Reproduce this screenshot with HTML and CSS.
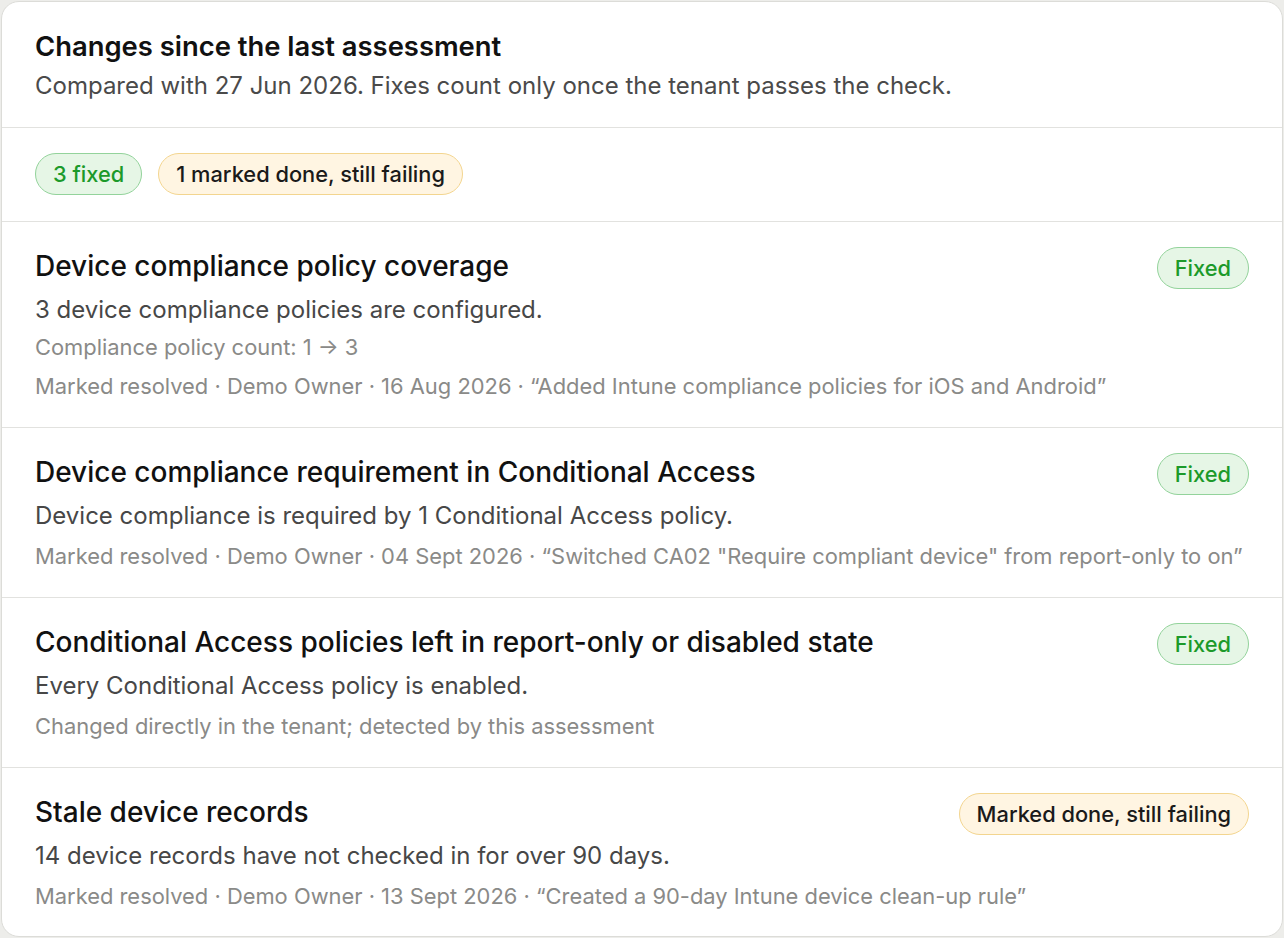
FILE: index.html
```html
<!DOCTYPE html>
<html lang="en">
<head>
    <meta charset="UTF-8">
    <meta name="viewport" content="width=device-width, initial-scale=1.0">
    <title>Changes since the last assessment</title>
    <link rel="stylesheet" href="styles.css">
</head>
<body>
    <div class="card">
        <div class="card-header">
            <h2>Changes since the last assessment</h2>
            <p>Compared with 27 Jun 2026. Fixes count only once the tenant passes the check.</p>
        </div>

        <div class="summary">
            <span class="pill pill-fixed">3 fixed</span>
            <span class="pill pill-failing">1 marked done, still failing</span>
        </div>

        <div class="change">
            <h3>Device compliance policy coverage</h3>
            <span class="pill pill-fixed">Fixed</span>
            <p class="desc">3 device compliance policies are configured.</p>
            <p class="detail">Compliance policy count: 1 → 3</p>
            <p class="note">Marked resolved · Demo Owner · 16 Aug 2026 · “Added Intune compliance policies for iOS and Android”</p>
        </div>

        <div class="change">
            <h3>Device compliance requirement in Conditional Access</h3>
            <span class="pill pill-fixed">Fixed</span>
            <p class="desc">Device compliance is required by 1 Conditional Access policy.</p>
            <p class="note">Marked resolved · Demo Owner · 04 Sept 2026 · “Switched CA02 "Require compliant device" from report-only to on”</p>
        </div>

        <div class="change">
            <h3>Conditional Access policies left in report-only or disabled state</h3>
            <span class="pill pill-fixed">Fixed</span>
            <p class="desc">Every Conditional Access policy is enabled.</p>
            <p class="note">Changed directly in the tenant; detected by this assessment</p>
        </div>

        <div class="change">
            <h3>Stale device records</h3>
            <span class="pill pill-failing">Marked done, still failing</span>
            <p class="desc">14 device records have not checked in for over 90 days.</p>
            <p class="note">Marked resolved · Demo Owner · 13 Sept 2026 · “Created a 90-day Intune device clean-up rule”</p>
        </div>
    </div>
</body>
</html>
```

FILE: styles.css
```css
* {
    box-sizing: border-box;
    margin: 0;
    padding: 0;
}

body {
    font-family: Inter, 'Noto Sans', sans-serif;
    background: #ededea;
    color: #111;
    padding: 1px;
}

.card {
    background: white;
    border: 1px solid #dcdcd8;
    border-radius: 18px;
    height: 936px;
    overflow: hidden;
}

.card-header {
    padding: 28px 33px 27px;
    border-bottom: 1px solid #e2e2df;
}

.card-header h2 {
    font-size: 27.4px;
    line-height: 32px;
    font-weight: 600;
    color: #111;
}

.card-header p {
    margin-top: 10px;
    font-size: 24px;
    line-height: 28px;
    color: #4a4a4a;
}

.summary {
    display: flex;
    gap: 16px;
    padding: 25px 33px 26px;
    border-bottom: 1px solid #e2e2df;
}

.pill {
    display: inline-flex;
    align-items: center;
    height: 42px;
    padding: 0 17px;
    border-radius: 21px;
    font-size: 21.8px;
    font-weight: 500;
    white-space: nowrap;
}

.pill-fixed {
    background: #e6f6e6;
    border: 1.5px solid #93d39b;
    color: #1c9a2a;
}

.pill-failing {
    background: #fff5e2;
    border: 1.5px solid #f3d58f;
    color: #1a1a1a;
}

.change {
    display: grid;
    grid-template-columns: 1fr auto;
    align-items: start;
    column-gap: 20px;
    padding: 27px 33px;
    border-bottom: 1px solid #e2e2df;
}

.change:last-child {
    border-bottom: none;
}

.change h3 {
    font-size: 28px;
    line-height: 34px;
    font-weight: 500;
    color: #111;
}

.change .pill {
    margin-top: -2px;
    margin-bottom: -10px;
}

.desc,
.detail,
.note {
    grid-column: 1 / -1;
}

.desc {
    margin-top: 12px;
    font-size: 24px;
    line-height: 30px;
    color: #474747;
}

.detail,
.note {
    font-size: 21.9px;
    line-height: 28px;
    color: #8a8a88;
    white-space: nowrap;
}

.detail {
    margin-top: 8px;
}

.note {
    margin-top: 11px;
}
```
